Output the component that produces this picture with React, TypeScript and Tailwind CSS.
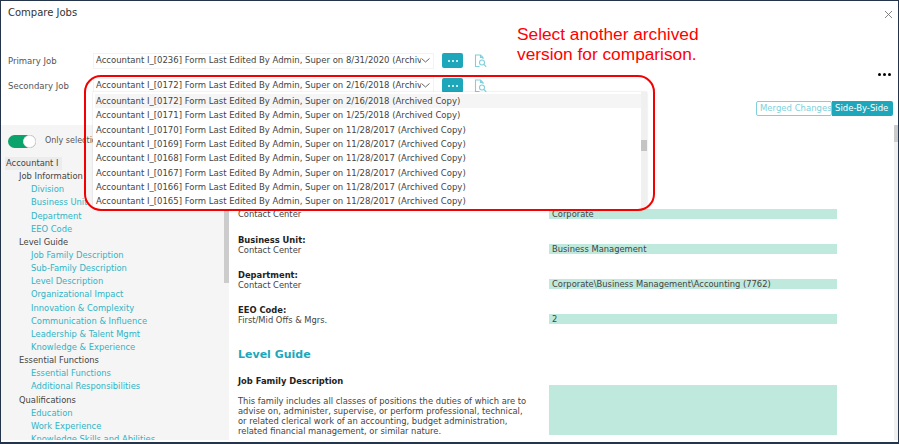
import React from "react";

const options = [
  ["0172", "2/16/2018"],
  ["0171", "1/25/2018"],
  ["0170", "11/28/2017"],
  ["0169", "11/28/2017"],
  ["0168", "11/28/2017"],
  ["0167", "11/28/2017"],
  ["0166", "11/28/2017"],
  ["0165", "11/28/2017"],
];

const tree: [number, string][] = [
  [1, "Job Information"],
  [2, "Division"],
  [2, "Business Unit"],
  [2, "Department"],
  [2, "EEO Code"],
  [1, "Level Guide"],
  [2, "Job Family Description"],
  [2, "Sub-Family Description"],
  [2, "Level Description"],
  [2, "Organizational Impact"],
  [2, "Innovation & Complexity"],
  [2, "Communication & Influence"],
  [2, "Leadership & Talent Mgmt"],
  [2, "Knowledge & Experience"],
  [1, "Essential Functions"],
  [2, "Essential Functions"],
  [2, "Additional Responsibilities"],
  [1, "Qualifications"],
  [2, "Education"],
  [2, "Work Experience"],
  [2, "Knowledge Skills and Abilities"],
];

function DocSearch() {
  return (
    <svg width="13" height="14" viewBox="0 0 13 14" fill="none" stroke="#7fd0dc" strokeWidth="1.1">
      <path d="M5.5 12.5H1.5V1H6.5L9 3.5V5" />
      <path d="M6.5 1V3.5H9" />
      <circle cx="8" cy="8.5" r="2.5" />
      <path d="M10 10.5L12.2 12.8" />
    </svg>
  );
}

function JobRow({ label, value }: { label: string; value: string }) {
  return (
    <div className="flex items-center h-[25px]">
      <div className="w-[92px] pl-[7px] text-[#555] pt-[2px]">{label}</div>
      <div className="w-[341px] h-[16px] flex items-center justify-between pl-[2px] pr-[3px] border border-[#f3f3f3] text-[#444] whitespace-nowrap">
        <span className="w-[327px] overflow-hidden">{value}</span>
        <svg width="9" height="5" viewBox="0 0 9 5" fill="none" stroke="#555" strokeWidth="0.9" className="shrink-0">
          <path d="M0.5 0.5L4.5 4L8.5 0.5" />
        </svg>
      </div>
      <button className="ml-[8px] w-[21px] h-[15px] rounded-[2px] bg-[#1ea7bb] flex items-center justify-center gap-[2px]">
        <span className="w-[2px] h-[2px] bg-white rounded-full" />
        <span className="w-[2px] h-[2px] bg-white rounded-full" />
        <span className="w-[2px] h-[2px] bg-white rounded-full" />
      </button>
      <div className="ml-[11px] flex"><DocSearch /></div>
    </div>
  );
}

function Field({ label, sub, value, mt, pt }: { label: string; sub: string; value: string; mt: string; pt: string }) {
  return (
    <div className={`flex ${mt}`}>
      <div className={`w-[311px] leading-[10px] ${pt}`}>
        <div className="h-[10px] font-bold text-[#222]">{label}</div>
        <div className="text-[#444]">{sub}</div>
      </div>
      <div className="w-[288px] h-[10px] mt-[10px] bg-[#bfe9dc] pl-[3px] leading-[10px] text-[#444]">{value}</div>
    </div>
  );
}

export default function App() {
  return (
    <div className="relative w-[899px] h-[444px] overflow-hidden bg-white border border-[#24344a] border-b-[2px] text-[8.5px] font-['DejaVu_Sans',Verdana,sans-serif]">
      {/* Header */}
      <div className="flex justify-between h-[47px] pl-[7px] pr-[4px] pt-[4px]">
        <div className="text-[10px] text-[#333] leading-[15px]">Compare Jobs</div>
        <svg width="9" height="9" viewBox="0 0 9 9" stroke="#777" strokeWidth="0.9" className="mt-[5px] mr-[1px]">
          <path d="M1 1L8 8M8 1L1 8" />
        </svg>
      </div>
      <div className="flex flex-col">
        <JobRow label="Primary Job" value="Accountant I_[0236] Form Last Edited By Admin, Super on 8/31/2020  (Archived Copy)" />
        <JobRow label="Secondary Job" value="Accountant I_[0172] Form Last Edited By Admin, Super on 2/16/2018  (Archived Copy)" />
      </div>
      {/* segmented */}
      <div className="flex justify-end h-[16px] mt-[3px] pr-[5px]">
        <div className="flex items-center h-[15px] border border-[#7fd0dc] rounded-[2px] px-[3px] text-[#7fd0dc] w-[76px] whitespace-nowrap">Merged Changes</div>
        <div className="flex items-center h-[15px] bg-[#1ea7bb] rounded-r-[2px] px-[3px] text-white w-[61px] whitespace-nowrap">Side-By-Side</div>
      </div>
      {/* main */}
      <div className="flex h-[315px] mt-[8px] text-[8.35px]">
        <aside className="relative w-[228px] bg-[#f5f5f5] flex shrink-0 overflow-hidden">
          <div className="flex-1 pl-[4px] pt-[9px]">
            <div className="flex items-center h-[14px] pl-[3px]">
              <div className="relative w-[28px] h-[13px] rounded-full bg-[#0aa36c]">
                <div className="absolute right-0 top-0 w-[13px] h-[13px] rounded-full bg-white border border-[#e5e5e5]" />
              </div>
              <span className="ml-[9px] text-[8px] text-[#555] whitespace-nowrap">Only selections</span>
            </div>
            <div className="mt-[9px]">
              <div className="h-[13.15px] leading-[13px] text-[#444] bg-[#ececec] w-[57px] pl-[1px] whitespace-nowrap">Accountant I</div>
              {tree.map(([lvl, t], i) => (
                <div
                  key={i}
                  className={
                    lvl === 1
                      ? "h-[13.15px] leading-[13px] pl-[14px] text-[#444] whitespace-nowrap"
                      : "h-[13.15px] leading-[13px] pl-[26px] text-[#2fb4c6] whitespace-nowrap"
                  }
                >
                  {t}
                </div>
              ))}
            </div>
          </div>
          <div className="w-[5px] h-[158px] bg-[#cccccc] shrink-0" />
        </aside>
        <main className="flex-1 flex min-w-0">
          <div className="flex-1 pl-[9px] pt-[73px] min-w-0">
            <Field label="" sub="Contact Center" value="Corporate" mt="mt-[1px]" pt="pt-0" />
            <Field label="Business Unit:" sub="Contact Center" value="Business Management" mt="mt-[14.7px]" pt="pt-[1px]" />
            <Field label="Department:" sub="Contact Center" value="Corporate\Business Management\Accounting (7762)" mt="mt-[14.7px]" pt="pt-[1px]" />
            <Field label="EEO Code:" sub="First/Mid Offs & Mgrs." value="2" mt="mt-[14px]" pt="pt-[1px]" />
            <div className="mt-[21px] text-[11px] leading-[18px] font-bold text-[#1ea7bb]">Level Guide</div>
            <div className="mt-[11px] font-bold text-[#222] leading-[12px]">Job Family Description</div>
            <div className="flex">
              <div className="w-[311px] pt-[9px] leading-[10px] text-[#444] whitespace-nowrap">
                This family includes all classes of positions the duties of which are to
                <br />
                advise on, administer, supervise, or perform professional, technical,
                <br />
                or related clerical work of an accounting, budget administration,
                <br />
                related financial management, or similar nature.
              </div>
              <div className="w-[288px] h-[50px] mt-[-2px] bg-[#bfe9dc]" />
            </div>
          </div>
          <div className="w-[4px] bg-[#f0f0f0] shrink-0">
            <div className="h-[17px] bg-[#cccccc]" />
          </div>
        </main>
      </div>

      {/* three-dots menu */}
      <div className="absolute left-[877px] top-[72px] flex gap-[2px]">
        <span className="w-[3px] h-[3px] rounded-full bg-black" />
        <span className="w-[3px] h-[3px] rounded-full bg-black" />
        <span className="w-[3px] h-[3px] rounded-full bg-black" />
      </div>

      {/* dropdown */}
      <div className="absolute left-[92px] top-[91px] w-[554px] h-[117px] bg-white shadow-[0_0_2px_rgba(0,0,0,0.15)] flex pt-[2px] pl-[2px]">
        <div className="flex-1 min-w-0">
          {options.map(([id, d], i) => (
            <div
              key={id}
              className={`h-[14.35px] leading-[14px] pl-[1px] text-[#444] whitespace-nowrap ${i === 0 ? "bg-[#f5f5f5]" : ""}`}
            >
              {`Accountant I_[${id}] Form Last Edited By Admin, Super on ${d} (Archived Copy)`}
            </div>
          ))}
        </div>
        <div className="w-[6px] mt-[-2px] bg-[#f0f0f0] relative">
          <div className="absolute top-[48px] w-[6px] h-[11px] bg-[#c4c4c4]" />
        </div>
      </div>

      {/* red annotation */}
      <div className="absolute left-[83px] top-[74px] w-[571px] h-[136px] rounded-[17px] border-2 border-[#f40000] pointer-events-none" />
      <div className="absolute left-[516px] top-[23px] text-[17.3px] leading-[20px] text-[#ff0000] font-['Liberation_Sans',Arial,sans-serif]">
        Select another archived
        <br />
        version for comparison.
      </div>
    </div>
  );
}
